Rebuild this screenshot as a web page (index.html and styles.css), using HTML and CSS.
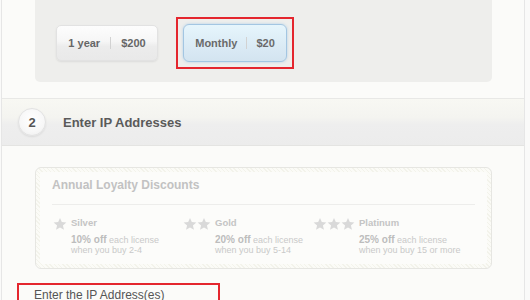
FILE: index.html
```html
<!DOCTYPE html>
<html>
<head>
<meta charset="utf-8">
<link rel="stylesheet" href="styles.css">
</head>
<body>
<div class="page">
  <section class="plan">
    <div class="plan-box">
      <div class="opt opt-year"><span>1 year</span><i class="sep"></i><span>$200</span></div>
      <div class="highlight">
        <div class="opt opt-month"><span>Monthly</span><i class="sep"></i><span>$20</span></div>
      </div>
    </div>
  </section>

  <div class="step-head">
    <span class="step-num">2</span>
    <h2 class="step-title">Enter IP Addresses</h2>
  </div>

  <section class="step-body">
    <div class="loyalty">
      <div class="loyalty-inner">
        <h3 class="loyalty-title">Annual Loyalty Discounts</h3>
        <div class="tiers">
          <div class="tier">
            <span class="stars">
              <svg width="14" height="14" viewBox="0 0 24 24"><path d="M12 1.5l3.1 7.2 7.8.6-5.9 5.1 1.8 7.6L12 17.9 5.2 22l1.8-7.6-5.9-5.1 7.8-.6z"/></svg>
            </span>
            <div class="tier-text">
              <div class="tier-name">Silver</div>
              <p class="tier-desc"><b>10% off</b> each license<br>when you buy 2-4</p>
            </div>
          </div>
          <div class="tier">
            <span class="stars">
              <svg width="14" height="14" viewBox="0 0 24 24"><path d="M12 1.5l3.1 7.2 7.8.6-5.9 5.1 1.8 7.6L12 17.9 5.2 22l1.8-7.6-5.9-5.1 7.8-.6z"/></svg>
              <svg width="14" height="14" viewBox="0 0 24 24"><path d="M12 1.5l3.1 7.2 7.8.6-5.9 5.1 1.8 7.6L12 17.9 5.2 22l1.8-7.6-5.9-5.1 7.8-.6z"/></svg>
            </span>
            <div class="tier-text">
              <div class="tier-name">Gold</div>
              <p class="tier-desc"><b>20% off</b> each license<br>when you buy 5-14</p>
            </div>
          </div>
          <div class="tier">
            <span class="stars">
              <svg width="14" height="14" viewBox="0 0 24 24"><path d="M12 1.5l3.1 7.2 7.8.6-5.9 5.1 1.8 7.6L12 17.9 5.2 22l1.8-7.6-5.9-5.1 7.8-.6z"/></svg>
              <svg width="14" height="14" viewBox="0 0 24 24"><path d="M12 1.5l3.1 7.2 7.8.6-5.9 5.1 1.8 7.6L12 17.9 5.2 22l1.8-7.6-5.9-5.1 7.8-.6z"/></svg>
              <svg width="14" height="14" viewBox="0 0 24 24"><path d="M12 1.5l3.1 7.2 7.8.6-5.9 5.1 1.8 7.6L12 17.9 5.2 22l1.8-7.6-5.9-5.1 7.8-.6z"/></svg>
            </span>
            <div class="tier-text">
              <div class="tier-name">Platinum</div>
              <p class="tier-desc"><b>25% off</b> each license<br>when you buy 15 or more</p>
            </div>
          </div>
        </div>
      </div>
    </div>

    <div class="ip-field">
      <label class="ip-label">Enter the IP Address(es)</label>
    </div>
  </section>
</div>
</body>
</html>
```

FILE: styles.css
```css
html, body {
  margin: 0;
  padding: 0;
  background: #fafaf9;
  font-family: "Liberation Sans", Arial, sans-serif;
}

.page {
  margin-left: 1px;
  width: 522px;
  border-left: 1px solid #e6e6e6;
  border-right: 1px solid #e6e6e6;
  background: #fbfbf9;
  height: 300px;
  overflow: hidden;
}

/* plan selection */
.plan {
  padding: 0 32px 16px 33px;
  border-bottom: 1px solid #e8e8e6;
}

.plan-box {
  height: 82px;
  box-sizing: border-box;
  background: #eeeeec;
  border-radius: 0 0 5px 5px;
  display: flex;
  align-items: flex-start;
  padding: 17px 0 0 21px;
}

.opt {
  display: flex;
  align-items: center;
  justify-content: center;
  gap: 9px;
  box-sizing: border-box;
  font-size: 11px;
  font-weight: bold;
  color: #666;
}

.opt .sep {
  display: block;
  width: 1px;
  height: 12px;
  background: #d2d2d2;
}

.opt-year {
  margin-top: 8px;
  width: 102px;
  height: 36px;
  border: 1px solid #e2e2e2;
  border-radius: 5px;
  background: linear-gradient(#fdfdfd 0%, #f6f6f6 45%, #ececec 60%, #e9e9e9 100%);
  box-shadow: 0 1px 2px rgba(0, 0, 0, 0.08);
  gap: 10px;
}

.highlight {
  margin-left: 18px;
  border: 2px solid #e4262e;
  padding: 5px;
}

.opt-month {
  width: 104px;
  height: 38px;
  border: 1px solid #a3c6e2;
  border-radius: 6px;
  background: linear-gradient(#e6f5fc 0%, #dcecf6 50%, #d3e4f0 100%);
  box-shadow: 0 0 3px rgba(140, 190, 230, 0.6);
  color: #6a6a6a;
}

/* step header */
.step-head {
  height: 46px;
  border-bottom: 1px solid #e4e4e2;
  background: linear-gradient(#f8f8f3 0%, #f4f4f0 40%, #eeeeee 55%, #ececec 100%);
  display: flex;
  align-items: center;
  gap: 17px;
  padding-left: 16px;
}

.step-num {
  width: 28px;
  height: 28px;
  border-radius: 50%;
  box-sizing: border-box;
  border: 1px solid #e2e2e2;
  background: radial-gradient(circle at 50% 40%, #ffffff 0%, #f7f7f7 60%, #ececec 100%);
  box-shadow: 0 1px 2px rgba(0, 0, 0, 0.08);
  display: flex;
  align-items: center;
  justify-content: center;
  font-size: 13px;
  font-weight: bold;
  color: #555;
}

.step-title {
  margin: 0;
  font-size: 13px;
  font-weight: bold;
  color: #5a5a5a;
}

/* step body */
.step-body {
  padding: 21px 32px 0 33px;
}

.loyalty {
  height: 102px;
  box-sizing: border-box;
  border: 1px solid #e6e6e2;
  border-radius: 6px;
  padding: 4px;
  background: repeating-linear-gradient(45deg, #f3f3eb 0 1px, #fbfbf7 1px 3px);
}

.loyalty-inner {
  height: 100%;
  box-sizing: border-box;
  background: #fcfcfa;
  border-radius: 3px;
  padding: 6px 12px 0 12px;
}

.loyalty-title {
  margin: 0;
  font-size: 12px;
  line-height: 14px;
  font-weight: bold;
  color: #c2c2c2;
  padding-bottom: 12px;
  border-bottom: 1px solid #ededeb;
}

.tiers {
  display: grid;
  grid-template-columns: 130px 130px auto;
  padding: 12px 0 0 1px;
}

.tier {
  display: flex;
  align-items: flex-start;
  gap: 4px;
  white-space: nowrap;
}

.stars {
  display: flex;
  height: 14px;
}

.stars svg {
  fill: #d9d9d9;
  display: block;
}

.tier-name {
  font-size: 9.5px;
  line-height: 12px;
  font-weight: bold;
  color: #c4c4c4;
}

.tier-desc {
  margin: 6px 0 0 0;
  font-size: 9px;
  line-height: 10px;
  color: #c9c9c9;
}

.tier-desc b {
  font-size: 10px;
  color: #bdbdbd;
}

.ip-field {
  margin: 14px 0 0 -18px;
  width: 203px;
  height: 30px;
  box-sizing: border-box;
  border: 2px solid #e4262e;
  border-bottom: none;
  padding: 0 0 0 15px;
}

.ip-label {
  font-size: 12px;
  line-height: 14px;
  color: #555;
}
```
